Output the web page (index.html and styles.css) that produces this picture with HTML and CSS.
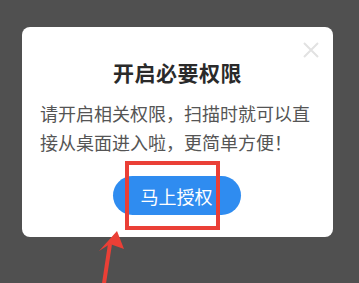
FILE: index.html
```html
<!DOCTYPE html>
<html lang="zh">
<head>
<meta charset="utf-8">
<link rel="stylesheet" href="styles.css">
</head>
<body>
<div class="screen">
  <div class="dialog">
    <svg class="close" width="16" height="16" viewBox="0 0 16 16"><path d="M1 1 L15 15 M15 1 L1 15" stroke="#e2e2e2" stroke-width="2" fill="none"/></svg>
    <h1 class="title">开启必要权限</h1>
    <p class="desc">请开启相关权限，扫描时就可以直接从桌面进入啦，更简单方便！</p>
    <div class="actions"><button class="btn">马上授权</button></div>
  </div>
  <div class="highlight"></div>
  <svg class="arrow" width="359" height="283" viewBox="0 0 359 283">
    <path d="M110 244 L103 290" stroke="#ea3f36" stroke-width="4" fill="none"/>
    <polygon points="117,231 99,251 110,244 124,249" fill="#ea3f36"/>
  </svg>
</div>
</body>
</html>
```

FILE: styles.css
```css
html, body {
  margin: 0;
  padding: 0;
  background: #505050;
}
.screen {
  position: relative;
  width: 359px;
  height: 283px;
  overflow: hidden;
  padding-top: 27px;
  box-sizing: border-box;
  font-family: "Noto Sans CJK SC", "Noto Sans", sans-serif;
}
.dialog {
  position: relative;
  margin-left: 22px;
  width: 311px;
  height: 210px;
  box-sizing: border-box;
  background: #fff;
  border-radius: 8px;
  padding: 30px 18px 0 18px;
}
.close {
  position: absolute;
  left: 281px;
  top: 15px;
}
.title {
  margin: 0;
  font-size: 21px;
  line-height: 30px;
  font-weight: 700;
  color: #2a2a2a;
  text-align: center;
  letter-spacing: 0.5px;
}
.desc {
  margin: 12px 0 0 0;
  font-size: 18px;
  line-height: 29px;
  color: #555;
}
.actions {
  display: flex;
  justify-content: center;
  margin-top: 19px;
}
.btn {
  width: 128px;
  height: 39px;
  border: none;
  border-radius: 20px;
  background: #2f8cf0;
  color: #fff;
  font-family: inherit;
  font-size: 18px;
  padding: 0;
  margin-left: -2px;
}
.highlight {
  position: absolute;
  left: 125px;
  top: 161px;
  width: 95px;
  height: 69px;
  box-sizing: border-box;
  border: 4px solid #ea3f36;
}
.arrow {
  position: absolute;
  left: 0;
  top: 0;
}
```
